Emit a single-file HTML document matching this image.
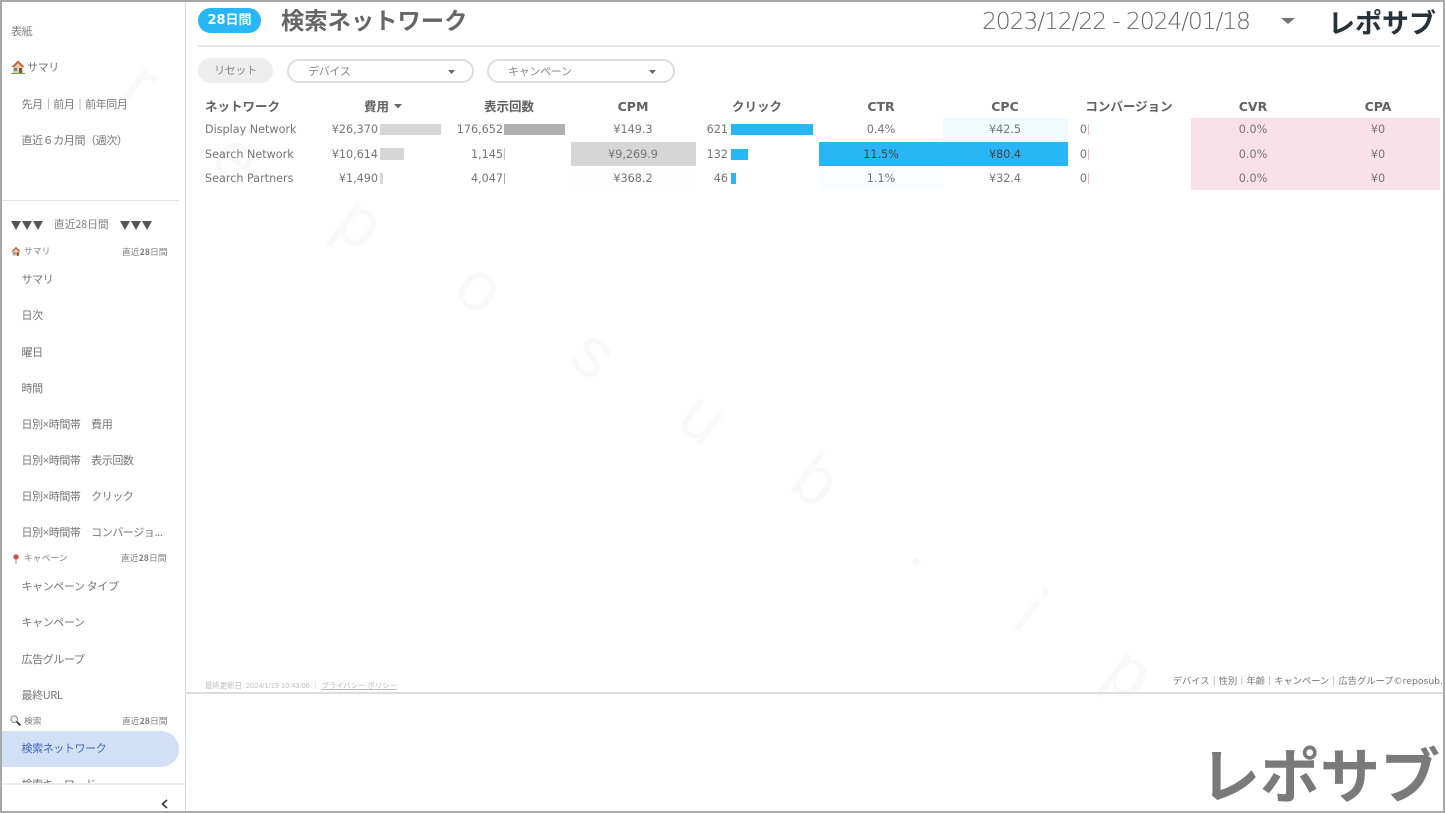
<!DOCTYPE html>
<html lang="ja"><head><meta charset="utf-8"><title>検索ネットワーク</title>
<style>
*{box-sizing:border-box;margin:0;padding:0}
html,body{width:1445px;height:813px;overflow:hidden;background:#fff}
body{position:relative;font-family:"DejaVu Sans","Noto Sans CJK JP",sans-serif;color:#757575}
.a,.t,.r,.c{position:absolute;white-space:nowrap}
.t{font-size:12px;line-height:16px}
.r{font-size:11.2px;line-height:16px;text-align:right;margin-top:1px}
.c{font-size:11.2px;line-height:16px;text-align:center;width:124px;margin-top:1px}
.h{font-size:12.5px;font-weight:bold;color:#616161;font-family:"DejaVu Sans","Noto Sans CJK JP",sans-serif}
.s{font-size:11px;letter-spacing:-.4px;color:#757575;left:21.5px;line-height:16px;position:absolute;white-space:nowrap;font-family:"Noto Sans CJK JP",sans-serif}
.s i{font:normal 11px "Liberation Sans",sans-serif}
.g{font-size:8.8px;color:#808080;position:absolute;line-height:12px;white-space:nowrap;font-family:"Noto Sans CJK JP",sans-serif}
.w{position:absolute;font:70px/70px "Liberation Sans",sans-serif;color:#f9f9f9;transform:rotate(37deg)}
.n{font-family:"DejaVu Sans",sans-serif}
</style></head><body>

<span class="w" style="left:130px;top:48px">r</span>
<span class="w" style="left:218px;top:122px">e</span>
<span class="w" style="left:341px;top:187px">p</span>
<span class="w" style="left:461px;top:252px">o</span>
<span class="w" style="left:577px;top:318px">s</span>
<span class="w" style="left:684px;top:382px">u</span>
<span class="w" style="left:797px;top:445px">b</span>
<span class="w" style="left:919px;top:510px">.</span>
<span class="w" style="left:1023px;top:576px">i</span>
<span class="w" style="left:1111px;top:637px">p</span>

<!-- header -->
<div class="a" style="left:198px;top:8px;width:63px;height:25px;border-radius:13px;background:#29b6f6;color:#fff;font:bold 13px/25px 'DejaVu Sans','Noto Sans CJK JP',sans-serif;text-align:center">28日間</div>
<div class="a" style="left:281px;top:2px;font:bold 23.3px/34px 'Noto Sans CJK JP',sans-serif;color:#666">検索ネットワーク</div>
<div class="a" style="left:982px;top:4px;font:200 23.5px/34px 'DejaVu Sans',sans-serif;color:#666;letter-spacing:-1.15px">2023/12/22 - 2024/01/18</div>
<svg class="a" style="left:1281px;top:18px" width="14" height="7"><polygon points="0,0 14,0 7,6" fill="#757575"/></svg>
<div class="a" style="left:1328px;top:3px;font:bold 27px/38px 'Noto Sans CJK JP',sans-serif;color:#263238">レポサブ</div>
<div class="a" style="left:198px;top:45px;width:1242px;height:2px;background:#e6e6e6"></div>

<!-- filters -->
<div class="a" style="left:198px;top:58px;width:75px;height:25px;border-radius:13px;background:#eee;color:#888;font:11px/25px 'Noto Sans CJK JP',sans-serif;text-align:center;letter-spacing:-.3px">リセット</div>
<div class="a" style="left:287px;top:59px;width:187px;height:24px;border-radius:12px;border:2px solid #ddd;color:#888;font:11px/20px 'Noto Sans CJK JP',sans-serif;padding-left:19px;letter-spacing:-.3px">デバイス</div>
<svg class="a" style="left:448px;top:70px" width="7" height="4"><polygon points="0,0 7,0 3.5,4" fill="#666"/></svg>
<div class="a" style="left:487px;top:59px;width:188px;height:24px;border-radius:12px;border:2px solid #ddd;color:#888;font:11px/20px 'Noto Sans CJK JP',sans-serif;padding-left:19px;letter-spacing:-.3px">キャンペーン</div>
<svg class="a" style="left:649px;top:70px" width="7" height="4"><polygon points="0,0 7,0 3.5,4" fill="#666"/></svg>

<!-- table backgrounds -->
<div class="a" style="left:571px;top:142px;width:124.5px;height:24px;background:#d6d6d6"></div>
<div class="a" style="left:571px;top:166px;width:124.5px;height:24px;background:#fefefe"></div>
<div class="a" style="left:819px;top:142px;width:248.5px;height:24px;background:#29b6f6"></div>
<div class="a" style="left:819px;top:166px;width:124px;height:24px;background:#fafdff"></div>
<div class="a" style="left:943px;top:118px;width:124.5px;height:24px;background:#f1faff"></div>
<div class="a" style="left:1191px;top:118px;width:249px;height:72px;background:#fae0e9"></div>

<!-- bars -->
<div class="a" style="left:380px;top:124px;width:61px;height:11px;background:#d6d6d6"></div>
<div class="a" style="left:380px;top:148px;width:24px;height:12px;background:#d6d6d6"></div>
<div class="a" style="left:380px;top:173px;width:3px;height:11px;background:#d6d6d6"></div>
<div class="a" style="left:504px;top:124px;width:61px;height:11px;background:#b0b0b0"></div>
<div class="a" style="left:504px;top:148px;width:1px;height:12px;background:#c4c4c4"></div>
<div class="a" style="left:504px;top:173px;width:1px;height:11px;background:#a8a8a8"></div>
<div class="a" style="left:731px;top:124px;width:82px;height:11px;background:#29b6f6"></div>
<div class="a" style="left:731px;top:149px;width:17px;height:11px;background:#29b6f6"></div>
<div class="a" style="left:731px;top:173px;width:5px;height:11px;background:#29b6f6"></div>
<div class="a" style="left:1088px;top:124px;width:1px;height:11px;background:#f3b6c9"></div>
<div class="a" style="left:1088px;top:149px;width:1px;height:11px;background:#f3b6c9"></div>
<div class="a" style="left:1088px;top:173px;width:1px;height:11px;background:#f3b6c9"></div>

<!-- table head -->
<div class="t h" style="left:205px;top:99px;font-size:12.5px">ネットワーク</div>
<div class="t h" style="left:364px;top:99px;font-size:12.5px">費用</div>
<svg class="a" style="left:394px;top:104px" width="8" height="5"><polygon points="0,0 8,0 4,4.5" fill="#666"/></svg>
<div class="t h" style="left:484px;top:99px;font-size:12.5px">表示回数</div>
<div class="c h" style="left:571px;top:98px">CPM</div>
<div class="c h" style="left:695px;top:98px">クリック</div>
<div class="c h" style="left:819px;top:98px">CTR</div>
<div class="c h" style="left:943px;top:98px">CPC</div>
<div class="c h" style="left:1067px;top:98px">コンバージョン</div>
<div class="c h" style="left:1191px;top:98px">CVR</div>
<div class="c h" style="left:1316px;top:98px">CPA</div>

<!-- rows -->
<div class="t" style="left:205px;top:122px;font-size:11.2px">Display Network</div>
<div class="t" style="left:205px;top:147px;font-size:11.2px">Search Network</div>
<div class="t" style="left:205px;top:171px;font-size:11.2px">Search Partners</div>

<div class="r" style="right:1067px;top:121px">¥26,370</div>
<div class="r" style="right:1067px;top:146px">¥10,614</div>
<div class="r" style="right:1067px;top:170px">¥1,490</div>
<div class="r" style="right:942px;top:121px">176,652</div>
<div class="r" style="right:942px;top:146px">1,145</div>
<div class="r" style="right:942px;top:170px">4,047</div>
<div class="c" style="left:571px;top:121px">¥149.3</div>
<div class="c" style="left:571px;top:146px">¥9,269.9</div>
<div class="c" style="left:571px;top:170px">¥368.2</div>
<div class="r" style="right:717px;top:121px">621</div>
<div class="r" style="right:717px;top:146px">132</div>
<div class="r" style="right:717px;top:170px">46</div>
<div class="c" style="left:819px;top:121px">0.4%</div>
<div class="c" style="left:819px;top:146px;color:#444">11.5%</div>
<div class="c" style="left:819px;top:170px">1.1%</div>
<div class="c" style="left:943px;top:121px">¥42.5</div>
<div class="c" style="left:943px;top:146px;color:#444">¥80.4</div>
<div class="c" style="left:943px;top:170px">¥32.4</div>
<div class="r" style="right:358px;top:121px">0</div>
<div class="r" style="right:358px;top:146px">0</div>
<div class="r" style="right:358px;top:170px">0</div>
<div class="c" style="left:1191px;top:121px">0.0%</div>
<div class="c" style="left:1191px;top:146px">0.0%</div>
<div class="c" style="left:1191px;top:170px">0.0%</div>
<div class="c" style="left:1316px;top:121px">¥0</div>
<div class="c" style="left:1316px;top:146px">¥0</div>
<div class="c" style="left:1316px;top:170px">¥0</div>

<!-- footer -->
<div class="a" style="left:205px;top:680px;font:7.4px/12px 'Liberation Sans','Noto Sans CJK JP',sans-serif;color:#bdbdbd">最終更新日: 2024/1/19 10:43:06 ｜ <span style="text-decoration:underline">プライバシー ポリシー</span></div>
<div class="a" style="right:2px;top:675px;font:9.25px/14px 'DejaVu Sans','Noto Sans CJK JP',sans-serif;color:#757575">デバイス｜性別｜年齢｜キャンペーン｜広告グループ©reposub.</div>
<div class="a" style="left:186px;top:692px;width:1258px;height:2px;background:#ddd"></div>
<div class="a" style="left:1200px;top:731px;font:bold 60px/84px 'Noto Sans CJK JP',sans-serif;color:#7a7a7a">レポサブ</div>

<!-- sidebar -->
<div class="a" style="left:185px;top:0;width:1px;height:813px;background:#dcdcdc"></div>
<div class="a" style="left:11px;top:23px;font:11px/16px 'Noto Sans CJK JP',sans-serif;letter-spacing:-.4px;color:#808080">表紙</div>
<svg class="a" style="left:11px;top:60px" width="14" height="14" viewBox="0 0 14 14"><polygon points="7,1 0.5,7 2,7 2,13 12,13 12,7 13.5,7" fill="#e8c9a0"/><polygon points="7,0.5 0.5,7 3,7 7,3 11,7 13.5,7" fill="#c0563a"/><rect x="3" y="8" width="3" height="3" fill="#5a86b5"/><rect x="8" y="8" width="3" height="5" fill="#7a5a3c"/><rect x="0" y="13" width="14" height="1" fill="#6aa84f"/></svg>
<div class="a" style="left:27px;top:59px;font:11px/16px 'Noto Sans CJK JP',sans-serif;letter-spacing:-.4px;color:#757575">サマリ</div>
<div class="s" style="top:96px">先月｜前月｜前年同月</div>
<div class="s" style="top:132px">直近６カ月間（週次）</div>
<div class="a" style="left:2px;top:200px;width:177px;height:1px;background:#e2e2e2"></div>

<svg class="a" style="left:11px;top:221px" width="32" height="9"><polygon points="0,0 10,0 5,9" fill="#555"/><polygon points="11,0 21,0 16,9" fill="#555"/><polygon points="22,0 32,0 27,9" fill="#555"/></svg>
<div class="a" style="left:54px;top:217px;font:10.7px/16px 'Noto Sans CJK JP',sans-serif;color:#808080">直近28日間</div>
<svg class="a" style="left:120px;top:221px" width="32" height="9"><polygon points="0,0 10,0 5,9" fill="#555"/><polygon points="11,0 21,0 16,9" fill="#555"/><polygon points="22,0 32,0 27,9" fill="#555"/></svg>

<svg class="a" style="left:11px;top:246px" width="10" height="11" viewBox="0 0 14 14"><polygon points="7,1 0.5,7 2,7 2,13 12,13 12,7 13.5,7" fill="#e8c9a0"/><polygon points="7,0.5 0.5,7 3,7 7,3 11,7 13.5,7" fill="#c0563a"/><rect x="3" y="8" width="3" height="3" fill="#5a86b5"/><rect x="8" y="8" width="3" height="5" fill="#7a5a3c"/></svg>
<div class="g" style="left:24px;top:245px">サマリ</div>
<div class="g" style="left:122px;top:246px">直近<b>28</b>日間</div>
<div class="s" style="top:271px">サマリ</div>
<div class="s" style="top:307px">日次</div>
<div class="s" style="top:344px">曜日</div>
<div class="s" style="top:380px">時間</div>
<div class="s" style="top:416px">日別<i>×</i>時間帯　費用</div>
<div class="s" style="top:452px">日別<i>×</i>時間帯　表示回数</div>
<div class="s" style="top:488px">日別<i>×</i>時間帯　クリック</div>
<div class="s" style="top:524px">日別<i>×</i>時間帯　コンバージョ...</div>

<svg class="a" style="left:12px;top:554px" width="8" height="10"><circle cx="4" cy="3" r="2.6" fill="#d9453a"/><rect x="3.5" y="4" width="1" height="6" fill="#999"/></svg>
<div class="g" style="left:24px;top:552px">キャペーン</div>
<div class="g" style="left:121px;top:552px">直近<b>28</b>日間</div>
<div class="s" style="top:578px">キャンペーン タイプ</div>
<div class="s" style="top:614px">キャンペーン</div>
<div class="s" style="top:651px">広告グループ</div>
<div class="s" style="top:687px">最終URL</div>

<svg class="a" style="left:10px;top:715px" width="11" height="11" viewBox="0 0 11 11"><circle cx="4.2" cy="4.2" r="3.3" fill="#eaf3fa" stroke="#888" stroke-width="1"/><line x1="6.8" y1="6.8" x2="10.4" y2="10.4" stroke="#333" stroke-width="1.8"/></svg>
<div class="g" style="left:24px;top:715px">検索</div>
<div class="g" style="left:122px;top:715px">直近<b>28</b>日間</div>
<div class="a" style="left:2px;top:731px;width:177px;height:36px;background:#d2e0f6;border-radius:0 18px 18px 0"></div>
<div class="s" style="top:740px;color:#3f67b8">検索ネットワーク</div>
<div class="s" style="top:776px;height:8px;overflow:hidden">検索キーワード</div>
<div class="a" style="left:2px;top:783px;width:183px;height:2px;background:#ececec"></div>
<svg class="a" style="left:160px;top:799px" width="9" height="10"><path d="M7 1 L2.5 5 L7 9" fill="none" stroke="#333" stroke-width="1.6"/></svg>

<!-- frame -->
<div class="a" style="left:0;top:0;width:1445px;height:813px;border:2px solid #a8a8a8;pointer-events:none"></div>
</body></html>
